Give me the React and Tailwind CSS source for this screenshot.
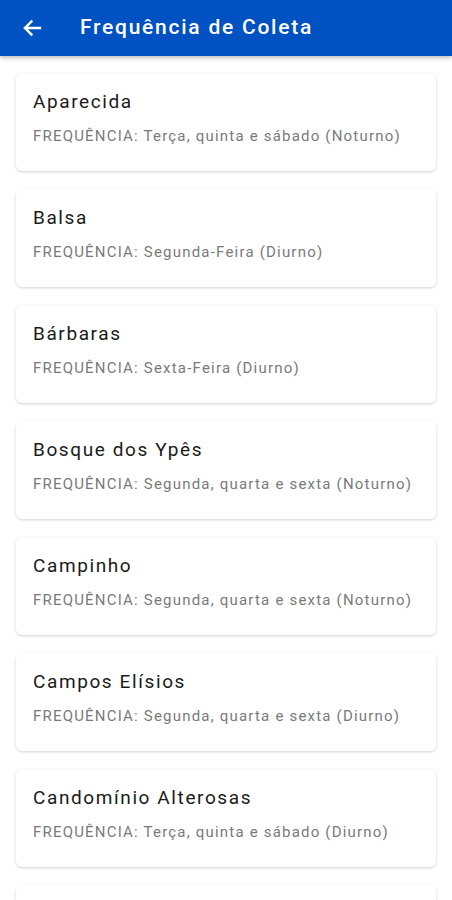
import React from "react";

const items = [
  ["Aparecida", "Terça, quinta e sábado (Noturno)"],
  ["Balsa", "Segunda-Feira (Diurno)"],
  ["Bárbaras", "Sexta-Feira (Diurno)"],
  ["Bosque dos Ypês", "Segunda, quarta e sexta (Noturno)"],
  ["Campinho", "Segunda, quarta e sexta (Noturno)"],
  ["Campos Elísios", "Segunda, quarta e sexta (Diurno)"],
  ["Candomínio Alterosas", "Terça, quinta e sábado (Diurno)"],
];

export default function App() {
  return (
    <div className="w-[452px] h-[900px] overflow-hidden bg-white" style={{ fontFamily: "Roboto, 'Noto Sans', sans-serif" }}>
      <div className="h-[56px] bg-[#0051c1] flex items-center shadow-[0_2px_4px_rgba(0,0,0,0.25)] relative z-10">
        <svg className="ml-[20px]" width="24" height="24" viewBox="0 0 24 24" fill="none">
          <path d="M20 12H5M11.5 5.5L5 12l6.5 6.5" stroke="white" strokeWidth="2.4" strokeLinecap="square" />
        </svg>
        <div className="ml-[36px] text-white text-[21px] font-medium tracking-[1.75px]">Frequência de Coleta</div>
      </div>
      <div className="flex flex-col gap-[18px] px-[16px] pt-[17px]">
        {items.map(([name, freq]) => (
          <div key={name} className="h-[98px] shrink-0 rounded-[6px] bg-white shadow-[0_1px_3px_rgba(0,0,0,0.18)] px-[17px] pt-[17px]">
            <div className="text-[19px] leading-[24px] tracking-[1.6px] text-[#1a1a1a]">{name}</div>
            <div className="mt-[12px] text-[15px] leading-[20px] tracking-[1.2px] text-[#7a7a7a]">FREQUÊNCIA: {freq}</div>
          </div>
        ))}
        <div className="h-[98px] shrink-0 rounded-[6px] bg-white shadow-[0_1px_3px_rgba(0,0,0,0.18)]" />
      </div>
    </div>
  );
}
